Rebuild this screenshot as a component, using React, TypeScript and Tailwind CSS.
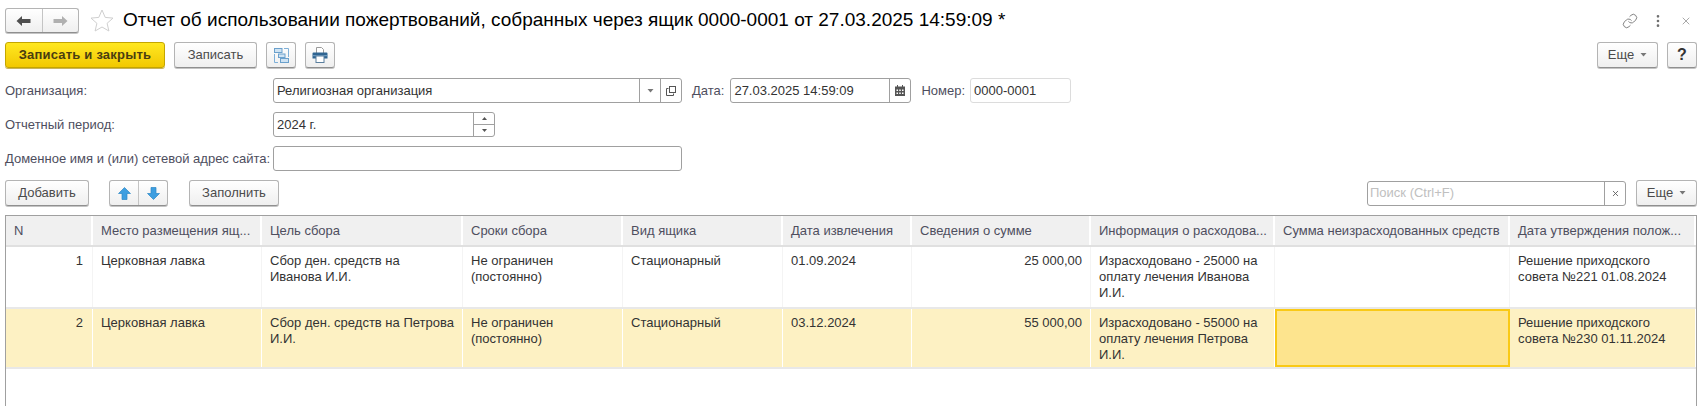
import React from 'react';
import { Link, MoreVertical, X } from 'lucide-react';

const btnClass =
  'flex items-center justify-center h-[26px] rounded-[3px] border border-[#b4b4b4] border-b-[#8f8f8f] bg-gradient-to-b from-white to-[#efefef] shadow-[0_1px_0_#c4c4c4] text-[13px] text-[#4b4b4b]';
const inputClass = 'flex items-center h-[25px] rounded-[3px] border border-[#a0a0a0] bg-white text-[13px] text-[#333]';
const labelClass = 'text-[13px] text-[#4e4e5e] whitespace-nowrap';

const Caret = () => (
  <svg width="7" height="4" viewBox="0 0 7 4"><path d="M0.5 0h6L3.5 3.5z" fill="#777" /></svg>
);

const NavArrow = ({ dir, color }: { dir: 'left' | 'right'; color: string }) => (
  <svg width="15" height="12" viewBox="0 0 15 12">
    <path
      d={dir === 'left' ? 'M0.5 6L6 1v3h8.5v4H6v3z' : 'M14.5 6L9 1v3H0.5v4H9v3z'}
      fill={color}
    />
  </svg>
);

const BlueArrow = ({ dir }: { dir: 'up' | 'down' }) => (
  <svg width="13" height="13" viewBox="0 0 13 13">
    <path
      d={dir === 'up' ? 'M6.5 0.5L12.5 6.5H9V12.5H4V6.5H0.5z' : 'M6.5 12.5L12.5 6.5H9V0.5H4V6.5H0.5z'}
      fill="#3d9ee0"
      stroke="#2b86c5"
      strokeWidth="0.7"
    />
  </svg>
);

const Star = () => (
  <svg width="24" height="23" viewBox="0 0 24 23">
    <path d="M12 1l3.2 7.4 7.8.7-5.9 5.2 1.8 7.7L12 18l-6.9 4 1.8-7.7L1 9.1l7.8-.7z" fill="#fff" stroke="#cfcfcf" />
  </svg>
);

const StructureIcon = () => (
  <svg width="15" height="15" viewBox="0 0 15 15" fill="none">
    <path d="M.5 6v8.5H4M10 .5h4.5V9" stroke="#7fb0d8" />
    <rect x=".5" y=".5" width="7.5" height="4" fill="#cfe3f3" stroke="#6aa0cc" />
    <rect x="4.5" y="6" width="6.5" height="3.5" fill="#cfe3f3" stroke="#6aa0cc" />
    <rect x="6.5" y="10.5" width="8" height="4" fill="#cfe3f3" stroke="#6aa0cc" />
  </svg>
);

const PrintIcon = () => (
  <svg width="16" height="16" viewBox="0 0 16 16">
    <path d="M4.5.5h5l2 2v4h-7z" fill="#fff" stroke="#9a9a9a" />
    <path d="M1.5 5.5h13a1 1 0 0 1 1 1v5h-15v-5a1 1 0 0 1 1-1z" fill="#2f6491" />
    <rect x="1" y="8" width="14" height="1.2" fill="#6d9bc0" />
    <rect x="4" y="9" width="8" height="6.5" fill="#fff" stroke="#5a7f9e" />
  </svg>
);

const CalendarIcon = () => (
  <svg width="10" height="11" viewBox="0 0 10 11">
    <path d="M0 1.5h2V0h1v1.5h4V0h1v1.5h2V11H0z" fill="#555" />
    <path d="M1.5 4.5H3V6H1.5zM4.25 4.5h1.5V6h-1.5zM7 4.5h1.5V6H7zM1.5 7.5H3V9H1.5zM4.25 7.5h1.5V9h-1.5zM7 7.5h1.5V9H7z" fill="#fff" />
  </svg>
);

const OpenIcon = () => (
  <svg width="10" height="10" viewBox="0 0 10 10" fill="none" stroke="#555">
    <path d="M2.5 2.5H.5v7h7V7.5" />
    <rect x="3.5" y=".5" width="6" height="6" />
  </svg>
);

type Row = { n: string; sum: string; info: string; decision: string; goal: string; date: string };

const rows: Row[] = [
  {
    n: '1',
    goal: 'Сбор ден. средств на Иванова И.И.',
    date: '01.09.2024',
    sum: '25 000,00',
    info: 'Израсходовано - 25000 на оплату лечения Иванова И.И.',
    decision: 'Решение приходского совета №221 01.08.2024',
  },
  {
    n: '2',
    goal: 'Сбор ден. средств на Петрова И.И.',
    date: '03.12.2024',
    sum: '55 000,00',
    info: 'Израсходовано - 55000 на оплату лечения Петрова И.И.',
    decision: 'Решение приходского совета №230 01.11.2024',
  },
];

const headers = [
  'N',
  'Место размещения ящ...',
  'Цель сбора',
  'Сроки сбора',
  'Вид ящика',
  'Дата извлечения',
  'Сведения о сумме',
  'Информация о расходова...',
  'Сумма неизрасходованных средств',
  'Дата утверждения полож...',
];

const gridCols = 'grid grid-cols-[87px_169px_201px_160px_160px_129px_179px_184px_235px_1fr]';

const App: React.FC = () => {
  const renderRow = (row: Row, active: boolean) => {
    const cell = `px-[8px] pt-[6px] text-[13px] leading-[16px] text-[#333] border-r ${active ? 'bg-[#fdf1c3] border-white' : 'bg-white border-[#f4f4f4]'}`;
    return (
      <div key={row.n} className={`${gridCols} ${active ? 'h-[60px]' : 'h-[62px]'} border-b-2 border-[#e8e8e8]`}>
        <div className={`${cell} text-right !pr-[9px]`}>{row.n}</div>
        <div className={cell}>Церковная лавка</div>
        <div className={cell}>{row.goal}</div>
        <div className={cell}>Не ограничен (постоянно)</div>
        <div className={cell}>Стационарный</div>
        <div className={cell}>{row.date}</div>
        <div className={`${cell} text-right`}>{row.sum}</div>
        <div className={cell}>{row.info}</div>
        {active ? (
          <div className="bg-[#fde48e] border-2 border-[#f9c916]"></div>
        ) : (
          <div className={cell}></div>
        )}
        <div className={cell}>{row.decision}</div>
      </div>
    );
  };

  return (
    <div className="w-[1706px] h-[406px] overflow-hidden bg-white flex flex-col px-[5px] pr-[9px] font-['Liberation_Sans',Arial,sans-serif]">
      {/* Title row */}
      <div className="flex items-center h-[25px] mt-[8px]">
        <div className={`${btnClass} !h-[25px] w-[74px]`}>
          <div className="flex-1 flex items-center justify-center border-r border-[#c4c4c4] h-full">
            <NavArrow dir="left" color="#4f4f4f" />
          </div>
          <div className="flex-1 flex items-center justify-center h-full">
            <NavArrow dir="right" color="#b0b0b0" />
          </div>
        </div>
        <div className="ml-[11px] flex items-center"><Star /></div>
        <div className="ml-[9px] text-[19px] text-black whitespace-nowrap">
          Отчет об использовании пожертвований, собранных через ящик 0000-0001 от 27.03.2025 14:59:09 *
        </div>
        <div className="ml-auto flex items-center text-[#6f6f6f]">
          <Link className="w-[16px] h-[16px]" strokeWidth={1.3} />
          <MoreVertical className="w-[16px] h-[16px] ml-[12px]" strokeWidth={2} />
          <X className="w-[12px] h-[12px] ml-[14px] mr-[5px]" strokeWidth={1.2} />
        </div>
      </div>

      {/* Command bar */}
      <div className="flex items-center mt-[9px]">
        <button className="flex items-center justify-center h-[26px] w-[160px] rounded-[3px] border border-[#c4a600] bg-gradient-to-b from-[#ffe81f] to-[#f2c800] shadow-[0_1px_0_#c9b35a] text-[13px] font-bold text-[#4a3d10] tracking-[0.2px]">
          Записать и закрыть
        </button>
        <button className={`${btnClass} w-[83px] ml-[9px]`}>Записать</button>
        <button className={`${btnClass} w-[30px] ml-[9px]`}><StructureIcon /></button>
        <button className={`${btnClass} w-[30px] ml-[9px]`}><PrintIcon /></button>
        <button className={`${btnClass} w-[61px] ml-auto gap-[6px]`}>Еще <Caret /></button>
        <button className={`${btnClass} w-[30px] ml-[9px] !text-[16px] font-bold !text-[#333]`}>?</button>
      </div>

      {/* Form */}
      <div className="flex items-center mt-[10px]">
        <div className={`${labelClass} w-[268px]`}>Организация:</div>
        <div className={`${inputClass} w-[409px]`}>
          <span className="flex-1 pl-[3px]">Религиозная организация</span>
          <span className="w-[21px] h-full flex items-center justify-center border-l border-[#a0a0a0]"><Caret /></span>
          <span className="w-[21px] h-full flex items-center justify-center border-l border-[#a0a0a0]"><OpenIcon /></span>
        </div>
        <div className={`${labelClass} ml-[10px]`}>Дата:</div>
        <div className={`${inputClass} w-[181px] ml-[6px]`}>
          <span className="flex-1 pl-[3px]">27.03.2025 14:59:09</span>
          <span className="w-[21px] h-full flex items-center justify-center border-l border-[#a0a0a0]"><CalendarIcon /></span>
        </div>
        <div className={`${labelClass} ml-[10px]`}>Номер:</div>
        <div className={`${inputClass} w-[101px] ml-[5px] !border-[#dcdcdc] pl-[3px]`}>0000-0001</div>
      </div>
      <div className="flex items-center mt-[9px]">
        <div className={`${labelClass} w-[268px]`}>Отчетный период:</div>
        <div className={`${inputClass} w-[222px]`}>
          <span className="flex-1 pl-[3px]">2024 г.</span>
          <span className="w-[21px] h-full flex flex-col border-l border-[#a0a0a0]">
            <span className="flex-1 flex items-center justify-center border-b border-[#a0a0a0]">
              <svg width="5" height="3" viewBox="0 0 5 3"><path d="M0 3h5L2.5 0z" fill="#555" /></svg>
            </span>
            <span className="flex-1 flex items-center justify-center">
              <svg width="5" height="3" viewBox="0 0 5 3"><path d="M0 0h5L2.5 3z" fill="#555" /></svg>
            </span>
          </span>
        </div>
      </div>
      <div className="flex items-center mt-[9px]">
        <div className={`${labelClass} w-[268px]`}>Доменное имя и (или) сетевой адрес сайта:</div>
        <div className={`${inputClass} w-[409px]`}></div>
      </div>

      {/* Table toolbar */}
      <div className="flex items-center mt-[9px]">
        <button className={`${btnClass} w-[84px]`}>Добавить</button>
        <div className={`${btnClass} w-[59px] ml-[20px]`}>
          <span className="flex-1 h-full flex items-center justify-center border-r border-[#c4c4c4]"><BlueArrow dir="up" /></span>
          <span className="flex-1 h-full flex items-center justify-center"><BlueArrow dir="down" /></span>
        </div>
        <button className={`${btnClass} w-[90px] ml-[21px]`}>Заполнить</button>
        <div className={`${inputClass} w-[259px] ml-auto`}>
          <span className="flex-1 pl-[2px] text-[#c0c0c0]">Поиск (Ctrl+F)</span>
          <span className="w-[21px] h-full flex items-center justify-center border-l border-[#a0a0a0]">
            <X className="w-[9px] h-[9px] text-[#555]" strokeWidth={2.2} />
          </span>
        </div>
        <button className={`${btnClass} w-[61px] ml-[10px] gap-[6px]`}>Еще <Caret /></button>
      </div>

      {/* Table */}
      <div className="flex-1 mt-[9px] border-x border-t border-[#a0a0a0]">
        <div className={`${gridCols} h-[31px] border-b-2 border-[#e0e0e0]`}>
          {headers.map((h) => (
            <div
              key={h}
              className="bg-[#f0f0f0] border-r-2 border-white pl-[8px] flex items-center text-[13px] text-[#4e4e5e] whitespace-nowrap min-w-0"
            >
              {h}
            </div>
          ))}
        </div>
        {rows.map((r, i) => renderRow(r, i === 1))}
      </div>
    </div>
  );
};

export default App;
